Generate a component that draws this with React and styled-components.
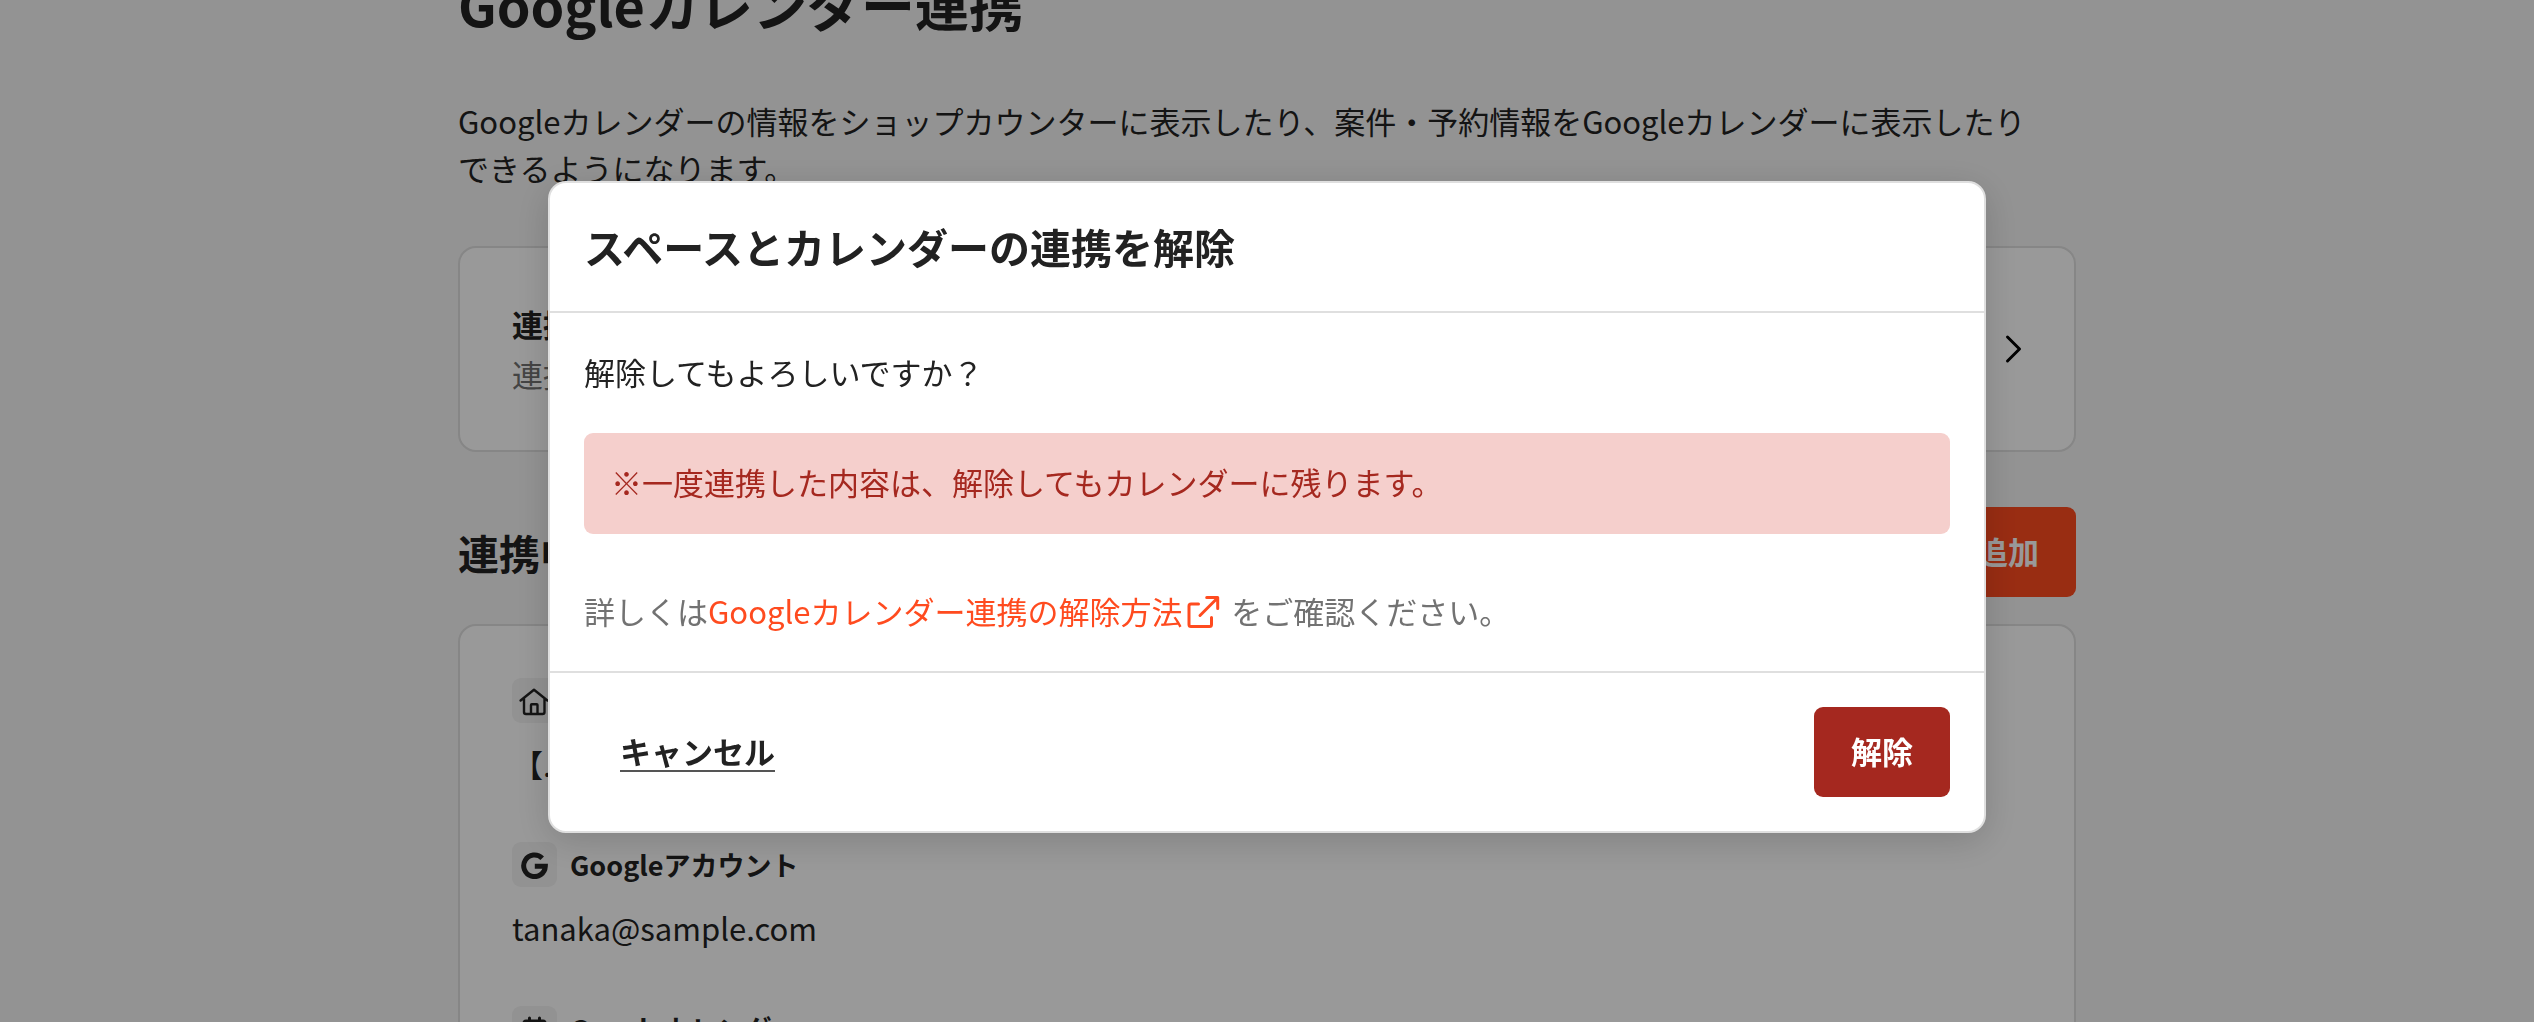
import React, { useState } from 'react'
import styled, { createGlobalStyle } from 'styled-components'

const GlobalStyle = createGlobalStyle`
    * {
        box-sizing: border-box;
    }
    body {
        margin: 0;
        overflow: hidden;
        background: #f5f5f5;
        color: #222;
        font-family: 'Noto Sans CJK JP', sans-serif;
        font-size: 31px;
        line-height: 47px;
    }
    h1, h2, h3, p, dl, dt, dd {
        margin: 0;
    }
    button {
        font: inherit;
        cursor: pointer;
    }
`
const Page = styled.main`
    max-width: 1618px;
    margin: -36px auto 0;
`
const PageTitle = styled.h1`
    font-size: 54px;
    line-height: 80px;
    margin-bottom: 53px;
`
const Lead = styled.p`
    margin-bottom: 55px;
    padding-right: 27px;
`
const Card = styled.section`
    background: #fff;
    border: 2px solid #dfdfdf;
    border-radius: 18px;
    padding: 52px;
`
const LinkCard = styled.a`
    display: flex;
    align-items: center;
    justify-content: space-between;
    background: #fff;
    border: 2px solid #dfdfdf;
    border-radius: 18px;
    padding: 51px 52px;
    color: inherit;
    text-decoration: none;
`
const LinkTitle = styled.h3`
    font-size: 31px;
    line-height: 50px;
`
const LinkNote = styled.p`
    color: #727272;
    line-height: 50px;
`
const SectionHead = styled.div`
    display: flex;
    align-items: center;
    justify-content: space-between;
    margin: 55px 0 27px;
`
const SectionTitle = styled.h2`
    font-size: 41px;
    line-height: 60px;
`
const Button = styled.button`
    height: 90px;
    padding: 0 37px 3px;
    border: 0;
    border-radius: 9px;
    background: ${props => props.$danger ? '#a5281f' : '#ff4b1f'};
    color: #fff;
    font-weight: 700;
`
const TextButton = styled.button`
    height: 90px;
    padding: 0 36px 3px;
    border: 0;
    background: none;
    color: #222;
    font-weight: 700;
    text-decoration: underline 2px #555;
    text-decoration-skip-ink: none;
    text-underline-offset: 6px;
`
const Details = styled.dl`
    display: flex;
    flex-direction: column;
    gap: 55px;
`
const Term = styled.dt`
    display: flex;
    align-items: center;
    gap: 13px;
    margin-bottom: 17px;
    font-size: 27px;
    line-height: 45px;
    font-weight: 700;
`
const IconTile = styled.span`
    display: flex;
    align-items: center;
    justify-content: center;
    width: 45px;
    height: 45px;
    border-radius: 9px;
    background: #f3f3f3;
`
const Overlay = styled.div`
    position: fixed;
    inset: 0;
    display: flex;
    align-items: center;
    justify-content: center;
    padding-bottom: 8px;
    background: rgba(0, 0, 0, .4);
`
const Dialog = styled.div`
    width: 90%;
    max-width: 1438px;
    background: #fff;
    border: 2px solid #dfdfdf;
    border-radius: 18px;
    box-shadow: 0 8px 36px rgba(0, 0, 0, .16);
`
const DialogHeader = styled.header`
    padding: 33px 34px 35px;
    border-bottom: 2px solid #dfdfdf;
`
const DialogBody = styled.div`
    padding: 35px 34px 37px;
`
const Alert = styled.p`
    margin: 38px 0 53px;
    padding: 25px 27px 29px;
    border-radius: 9px;
    background: #f5cfcc;
    color: #a5281f;
`
const Help = styled.p`
    color: #727272;
`
const HelpLink = styled.a`
    color: #ff4b1f;
    text-decoration: none;

    svg {
        margin: 0 4px;
        vertical-align: -5px;
    }
`
const DialogFooter = styled.footer`
    display: flex;
    justify-content: space-between;
    padding: 34px;
    border-top: 2px solid #dfdfdf;
`

const HomeIcon = () => (
    <svg width='32' height='32' viewBox='0 0 32 32' fill='none' stroke='#222' strokeWidth='2.4' strokeLinecap='round' strokeLinejoin='round'>
        <path d='M1.600 15.500 15 4.700l13.400 10.800M5 13.500V27a2 2 0 0 0 2 2h16.500a2 2 0 0 0 2-2V13.500' />
        <path d='M12 28.500V20a.8.8 0 0 1 .8-.8h4.900a.8.8 0 0 1 .8.8v8.500' />
    </svg>
)

const GoogleIcon = () => (
    <svg width='28' height='28' viewBox='0 0 28 28' fill='none' stroke='#222' strokeWidth='5'>
        <path d='M21.200 7.200A10.800 10.800 0 1 0 24.300 15.300H13.800' />
    </svg>
)

const CalendarIcon = () => (
    <svg width='28' height='28' viewBox='0 0 28 28' fill='none' stroke='#222' strokeWidth='3' strokeLinecap='round' strokeLinejoin='round'>
        <rect x='3' y='6' width='21' height='20' rx='2' />
        <path d='M3 9h21M8.500 3v4M18.500 3v4' />
    </svg>
)

const ChevronIcon = () => (
    <svg width='20' height='34' viewBox='0 0 20 34' fill='none' stroke='#000' strokeWidth='3' strokeLinecap='round' strokeLinejoin='round'>
        <path d='M5.500 5l12 12-12 12' />
    </svg>
)

const ExternalIcon = () => (
    <svg width='34' height='34' viewBox='0 0 34 34' fill='none' stroke='currentColor' strokeWidth='3' strokeLinecap='round' strokeLinejoin='round'>
        <path d='M12.500 9H5a2 2 0 0 0-2 2v18.500a2 2 0 0 0 2 2h18.500a2 2 0 0 0 2-2v-7' />
        <path d='M14 20.500 31.500 3M20.700 2.500H31.700V13.500' />
    </svg>
)

const details = [
    { id: 'space', icon: <HomeIcon />, label: 'スペース', value: '【.' },
    { id: 'account', icon: <GoogleIcon />, label: 'Googleアカウント', value: 'tanaka@sample.com' },
    { id: 'calendar', icon: <CalendarIcon />, label: 'Googleカレンダー', value: '' }
]

const App = () => {
    const [open, setOpen] = useState(true)

    const close = () => setOpen(false)

    return (
        <>
            <GlobalStyle />
            <Page>
                <PageTitle>Googleカレンダー連携</PageTitle>
                <Lead>
                    Googleカレンダーの情報をショップカウンターに表示したり、案件・予約情報をGoogleカレンダーに表示したりできるようになります。
                </Lead>
                <LinkCard href='#'>
                    <div>
                        <LinkTitle>連携</LinkTitle>
                        <LinkNote>連携</LinkNote>
                    </div>
                    <ChevronIcon />
                </LinkCard>
                <SectionHead>
                    <SectionTitle>連携中</SectionTitle>
                    <Button onClick={() => setOpen(true)}>追加</Button>
                </SectionHead>
                <Card>
                    <Details>
                        {details.map(item => (
                            <div key={item.id}>
                                <Term><IconTile>{item.icon}</IconTile>{item.label}</Term>
                                <dd>{item.value}</dd>
                            </div>
                        ))}
                    </Details>
                </Card>
            </Page>
            {open &&
                <Overlay>
                    <Dialog role='dialog' aria-modal='true' aria-labelledby='dialog-title'>
                        <DialogHeader>
                            <SectionTitle id='dialog-title'>スペースとカレンダーの連携を解除</SectionTitle>
                        </DialogHeader>
                        <DialogBody>
                            <p>解除してもよろしいですか？</p>
                            <Alert>※一度連携した内容は、解除してもカレンダーに残ります。</Alert>
                            <Help>
                                詳しくは<HelpLink href='#'>Googleカレンダー連携の解除方法<ExternalIcon /></HelpLink> をご確認ください。
                            </Help>
                        </DialogBody>
                        <DialogFooter>
                            <TextButton onClick={close}>キャンセル</TextButton>
                            <Button $danger onClick={close}>解除</Button>
                        </DialogFooter>
                    </Dialog>
                </Overlay>
            }
        </>
    )
}

export default App
